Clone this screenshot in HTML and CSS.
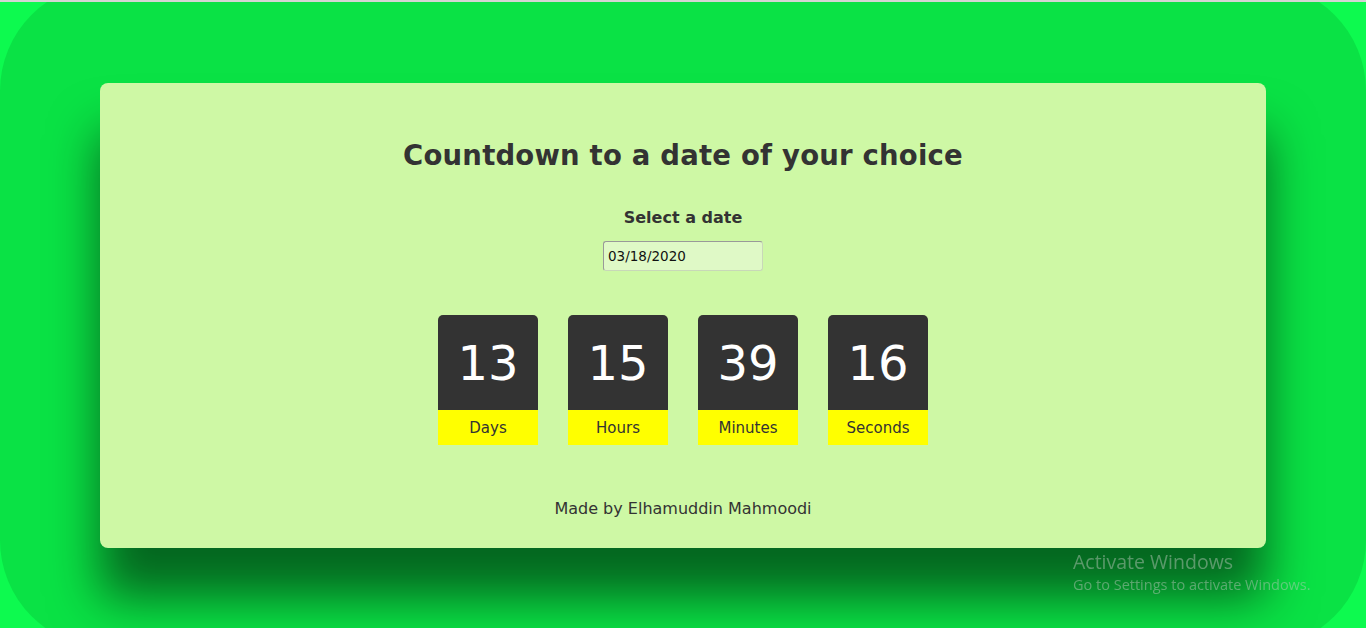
FILE: index.html
```html
<!DOCTYPE html>
<html lang="en">
<head>
<meta charset="utf-8">
<title>Countdown</title>
<link rel="stylesheet" href="styles.css">
</head>
<body>
<div class="topline"></div>
<div class="stage">
  <main class="card">
    <h1 class="title">Countdown to a date of your choice</h1>
    <h3 class="label">Select a date</h3>
    <input class="date" type="text" value="03/18/2020" readonly>
    <div class="timer">
      <div class="unit"><div class="num">13</div><div class="name">Days</div></div>
      <div class="unit"><div class="num">15</div><div class="name">Hours</div></div>
      <div class="unit"><div class="num">39</div><div class="name">Minutes</div></div>
      <div class="unit"><div class="num">16</div><div class="name">Seconds</div></div>
    </div>
    <p class="credit">Made by Elhamuddin Mahmoodi</p>
  </main>
</div>
<div class="watermark">
  <div class="wm-title">Activate Windows</div>
  <div class="wm-sub">Go to Settings to activate Windows.</div>
</div>
</body>
</html>
```
FILE: styles.css
```css
html, body {
  margin: 0;
  padding: 0;
  height: 100%;
  overflow: hidden;
}
body {
  background: #0dfa4f;
  font-family: "Comic Sans MS", "DejaVu Sans", sans-serif;
  color: #333333;
}
.topline {
  height: 2px;
  background: #d4d4d4;
  position: relative;
  z-index: 2;
}
.stage {
  margin-top: -19px;
  padding: 100px;
  border-radius: 108px;
  background: #0ae245;
}
.card {
  height: 465px;
  box-sizing: border-box;
  background: #cef8a5;
  border-radius: 8px;
  box-shadow: 0 50px 50px rgba(0, 0, 0, 0.55);
  display: flex;
  flex-direction: column;
  align-items: center;
  padding-top: 52px;
}
.title {
  margin: 0;
  font-size: 27.5px;
  line-height: 40px;
  font-weight: bold;
  letter-spacing: 0.2px;
}
.label {
  margin: 31px 0 0 0;
  font-size: 16px;
  line-height: 24px;
  font-weight: bold;
}
.date {
  margin-top: 11px;
  width: 160px;
  height: 30px;
  box-sizing: border-box;
  padding: 0 4px;
  font-family: inherit;
  font-size: 13.5px;
  color: #111;
  background: #dff9c6;
  border: 1px solid #c8d8b8;
  border-top-color: #999;
  border-left-color: #999;
  border-radius: 3px;
  outline: none;
}
.timer {
  margin-top: 44px;
  display: flex;
  gap: 30px;
}
.unit {
  width: 100px;
  display: flex;
  flex-direction: column;
}
.num {
  height: 95px;
  background: #333333;
  border-radius: 5px 5px 0 0;
  color: #ffffff;
  font-size: 48px;
  line-height: 97px;
  text-align: center;
}
.name {
  height: 35px;
  background: #ffff00;
  color: #333;
  font-size: 15px;
  line-height: 36px;
  text-align: center;
}
.credit {
  margin: 52px 0 0 0;
  font-size: 16px;
  line-height: 24px;
}
.watermark {
  position: fixed;
  left: 1073px;
  top: 550px;
  font-family: "Open Sans", "Noto Sans", sans-serif;
  color: rgba(195, 205, 195, 0.45);
}
.wm-title {
  font-size: 19.5px;
  line-height: 24px;
}
.wm-sub {
  font-size: 14.5px;
  line-height: 22px;
}
```
